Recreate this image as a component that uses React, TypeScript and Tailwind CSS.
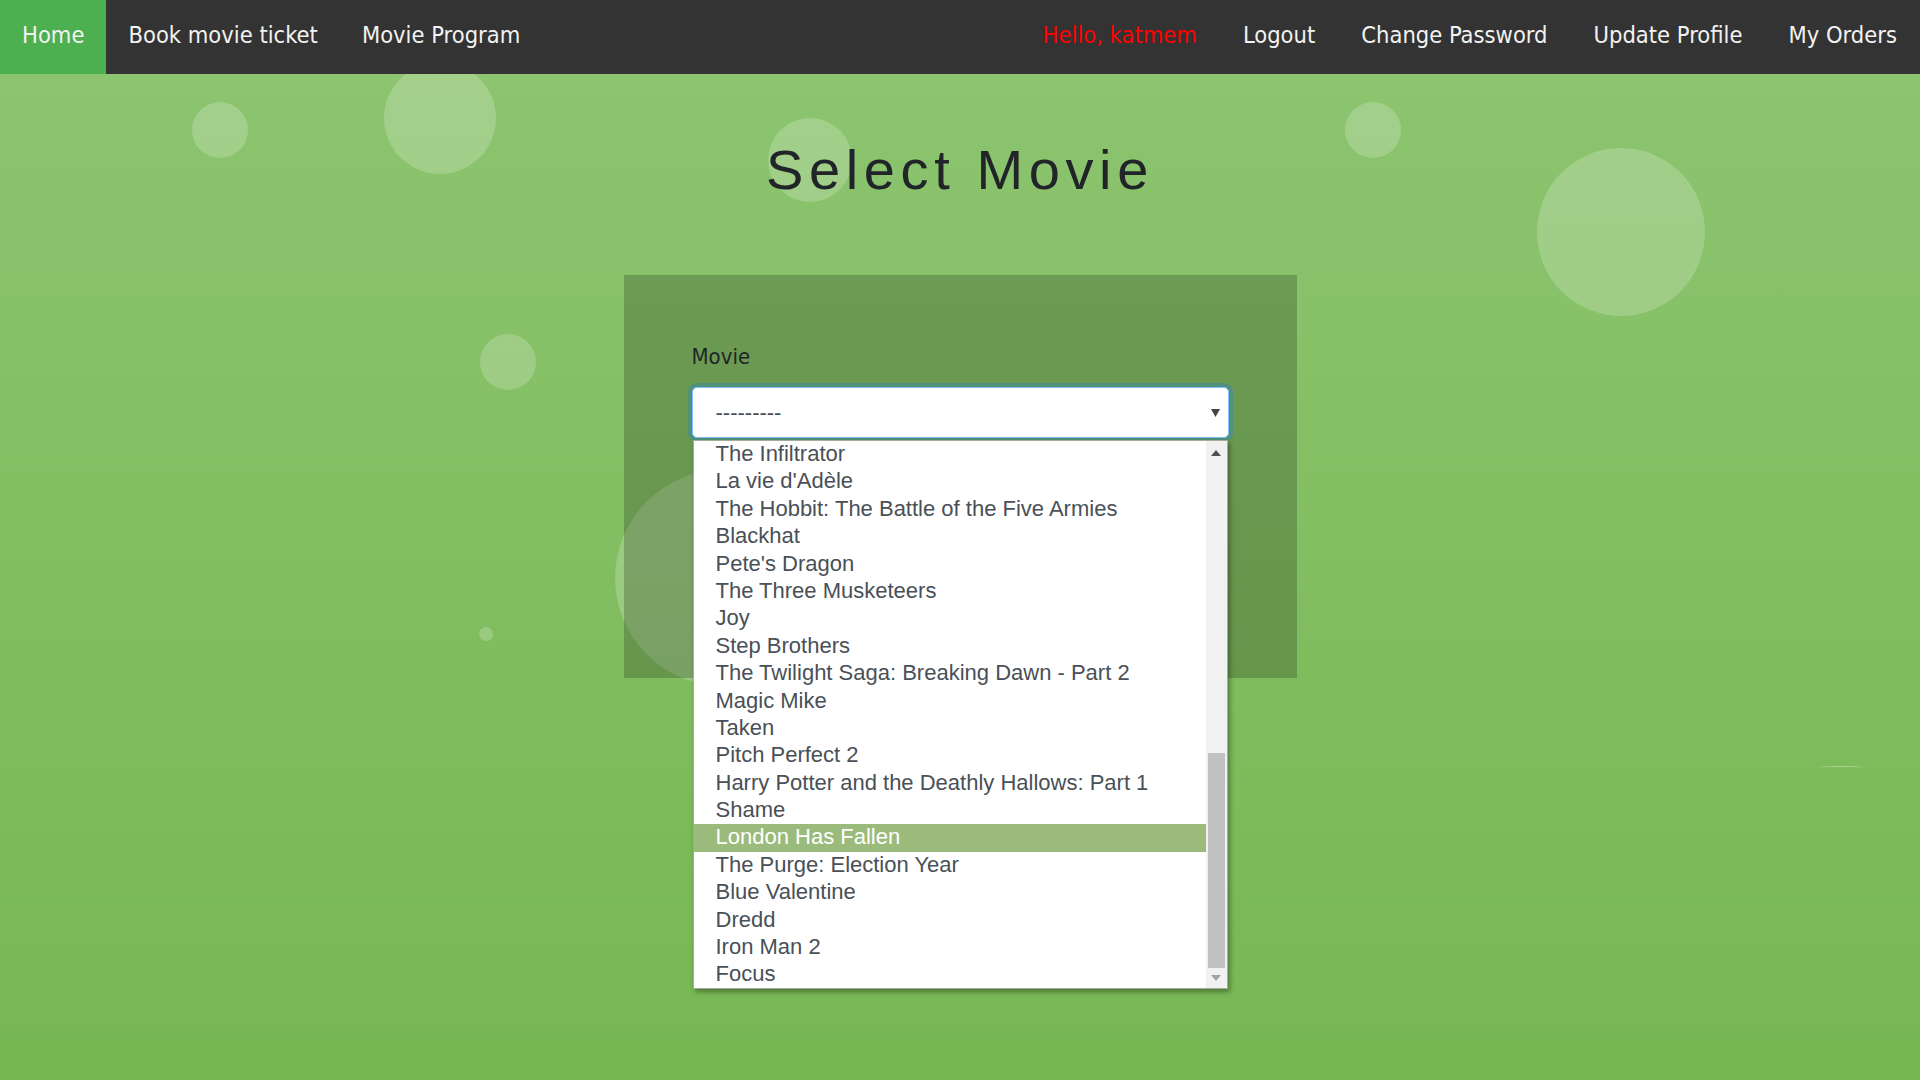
import React from 'react';

const movies = [
  'The Infiltrator',
  "La vie d'Adèle",
  'The Hobbit: The Battle of the Five Armies',
  'Blackhat',
  "Pete's Dragon",
  'The Three Musketeers',
  'Joy',
  'Step Brothers',
  'The Twilight Saga: Breaking Dawn - Part 2',
  'Magic Mike',
  'Taken',
  'Pitch Perfect 2',
  'Harry Potter and the Deathly Hallows: Part 1',
  'Shame',
  'London Has Fallen',
  'The Purge: Election Year',
  'Blue Valentine',
  'Dredd',
  'Iron Man 2',
  'Focus',
];

const selected = 'London Has Fallen';

const leftLinks = ['Book movie ticket', 'Movie Program'];
const rightLinks = ['Logout', 'Change Password', 'Update Profile', 'My Orders'];

function NavBar() {
  return (
    <nav className="flex h-[74px] bg-[#333333] font-['Liberation_Sans_Narrow','DejaVu_Sans_Condensed',sans-serif] text-[23.5px] text-[#f2f2f2]">
      <a className="flex items-center bg-[#4caf50] px-[22px] pb-[2px]">Home</a>
      {leftLinks.map((l) => (
        <a key={l} className="flex items-center px-[22px] pb-[2px]">
          {l}
        </a>
      ))}
      <div className="ml-auto flex">
        <a className="flex items-center px-[23px] pb-[2px] text-[#ff0000]">Hello, katmem</a>
        {rightLinks.map((l) => (
          <a key={l} className="flex items-center px-[23px] pb-[2px]">
            {l}
          </a>
        ))}
      </div>
    </nav>
  );
}

function Bubbles() {
  return (
    <div className="pointer-events-none absolute inset-0">
      <div className="absolute left-[192px] top-[28px] h-[56px] w-[56px] rounded-full bg-white/20" />
      <div className="absolute left-[384px] top-[-12px] h-[112px] w-[112px] rounded-full bg-white/20" />
      <div className="absolute left-[768px] top-[44px] h-[84px] w-[84px] rounded-full bg-white/20" />
      <div className="absolute left-[1345px] top-[28px] h-[56px] w-[56px] rounded-full bg-white/20" />
      <div className="absolute left-[1537px] top-[74px] h-[168px] w-[168px] rounded-full bg-white/20" />
      <div className="absolute left-[480px] top-[260px] h-[56px] w-[56px] rounded-full bg-white/20" />
      <div className="absolute left-[615px] top-[396px] h-[216px] w-[216px] rounded-full bg-white/20" />
      <div className="absolute left-[479px] top-[553px] h-[14px] w-[14px] rounded-full bg-white/20" />
      <div className="absolute left-[1820px] top-[692px] h-[3px] w-[43px] rounded-[50%] border-t border-white/40" />
    </div>
  );
}

function Triangle({ up, color }: { up?: boolean; color: string }) {
  return (
    <svg width="10" height="6" viewBox="0 0 10 6">
      <path d={up ? 'M0 6 L5 0 L10 6 Z' : 'M0 0 L10 0 L5 6 Z'} fill={color} />
    </svg>
  );
}

function MovieSelect() {
  return (
    <div className="relative">
      <div className="flex h-[51px] items-center justify-between rounded-[5px] border border-[#80bdff] bg-white pl-[23px] pr-[8px] text-[22px] text-[#495057] shadow-[0_0_0_4px_rgba(0,123,255,0.25)]">
        <span>---------</span>
        <svg width="9" height="8" viewBox="0 0 9 8">
          <path d="M0 0 L9 0 L4.5 8 Z" fill="#444444" />
        </svg>
      </div>

      {/* open option list */}
      <div className="absolute left-[1px] right-[1px] top-[53px] z-10 flex h-[549px] border border-[#a4ac9c] bg-white shadow-[2px_3px_5px_rgba(0,0,0,0.35)]">
        <div className="flex-1 overflow-hidden">
          {movies.map((m) => (
            <div
              key={m}
              className={`pb-[2.4px] pl-[22px] text-[22px] leading-[25px] ${
                m === selected ? 'bg-[#9bbb7c] text-white' : 'text-[#495057]'
              }`}
            >
              {m}
            </div>
          ))}
        </div>
        <div className="flex w-[21px] flex-col bg-[#f1f1f1]">
          <div className="flex h-[24px] items-center justify-center">
            <Triangle up color="#505050" />
          </div>
          <div className="flex flex-1 flex-col justify-end px-[2px]">
            <div className="h-[215px] bg-[#c1c1c1]" />
          </div>
          <div className="flex h-[20px] items-center justify-center">
            <Triangle color="#a3a3a3" />
          </div>
        </div>
      </div>
    </div>
  );
}

export default function App() {
  return (
    <div className="min-h-[1080px] font-['Liberation_Sans',Arial,sans-serif]">
      <NavBar />
      <main className="relative h-[1006px] overflow-hidden bg-gradient-to-b from-[#8cc46f] to-[#77b752]">
        <Bubbles />
        <div className="relative">
          <h1 className="pt-[62px] text-center text-[56px] leading-[67px] tracking-[0.1em] text-[#212529]">
            Select Movie
          </h1>
          <div className="mx-auto mt-[72px] h-[403px] w-[673px] bg-black/20 px-[68px] pt-[64px]">
            <label className="mb-[12px] block font-['Liberation_Sans_Narrow','DejaVu_Sans_Condensed',sans-serif] text-[22px] leading-[36px] text-[#212529]">
              Movie
            </label>
            <MovieSelect />
          </div>
        </div>
      </main>
    </div>
  );
}
